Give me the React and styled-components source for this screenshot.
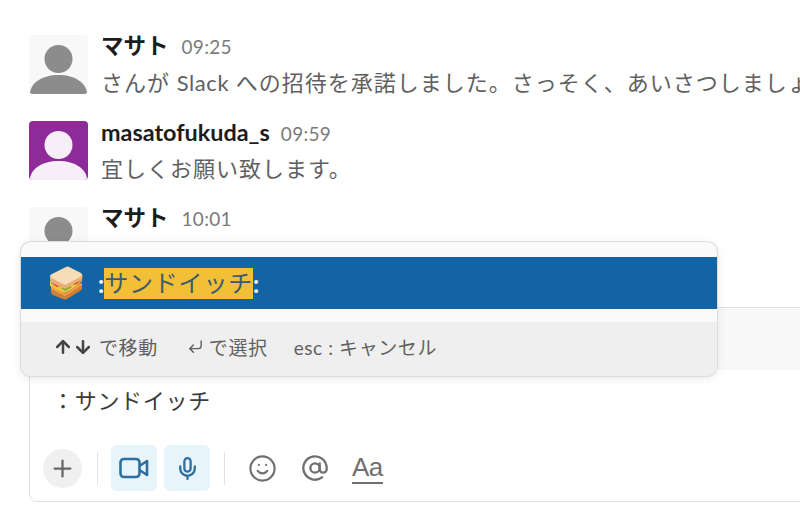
import React from 'react';
import styled, { createGlobalStyle } from 'styled-components';
import { ArrowUp, ArrowDown, CornerDownLeft, Plus, Mic, Smile, AtSign } from 'lucide-react';

const GlobalStyle = createGlobalStyle`
    html, body {
        margin: 0;
        background: #fff;
        font-family: Lato, 'Noto Sans CJK JP', sans-serif;
    }
`;

const Page = styled.div`
    position: relative;
    width: 800px;
    height: 526px;
    padding: 35px 0 0 29px;
    box-sizing: border-box;
    overflow: hidden;
`;

const Message = styled.div`
    display: flex;
    gap: 13px;
    height: 59px;
    margin-bottom: 27px;
`;

const AvatarBox = styled.div`
    flex: none;
    width: 59px;
    height: 59px;
    border-radius: 4px;
    overflow: hidden;
    background: ${(p) => p.$bg};
    svg { display: block; }
`;

const Body = styled.div`
    min-width: 0;
    white-space: nowrap;
`;

const Head = styled.div`
    display: flex;
    align-items: baseline;
    gap: ${(p) => p.$gap}px;
    height: 26px;
    margin-top: -2px;
    line-height: 26px;
`;

const Name = styled.span`
    font-size: ${(p) => p.$size}px;
    font-weight: 700;
    color: #1d1c1d;
`;

const Time = styled.span`
    font-size: 19px;
    letter-spacing: 0.3px;
    color: #7b7a7b;
`;

const Text = styled.div`
    margin-top: 9px;
    font-size: 22px;
    line-height: 30px;
    letter-spacing: 1px;
    color: #616061;
`;

const Latin = styled.span`
    letter-spacing: 0.6px;
`;

const Composer = styled.div`
    width: 800px;
    height: 195px;
    margin-top: 41px;
    border: 1px solid #e0e0e0;
    border-radius: 8px;
    box-sizing: border-box;
    overflow: hidden;
`;

const FormatBar = styled.div`
    height: 62px;
    background: #f8f8f8;
`;

const Input = styled.div`
    height: 75px;
    padding: 16px 0 0 22px;
    box-sizing: border-box;
    font-size: 22px;
    line-height: 30px;
    letter-spacing: 0.7px;
    color: #3d3c3d;
`;

const Toolbar = styled.div`
    display: flex;
    align-items: center;
    height: 46px;
    padding-left: 13px;
`;

const RoundButton = styled.div`
    display: flex;
    align-items: center;
    justify-content: center;
    width: 39px;
    height: 39px;
    border-radius: 50%;
    background: #f0f0f0;
    color: #666;
`;

const Divider = styled.div`
    width: 1px;
    height: 33px;
    margin: 0 ${(p) => p.$right}px 0 ${(p) => p.$left}px;
    background: #e2e2e2;
`;

const MediaButton = styled.div`
    display: flex;
    align-items: center;
    justify-content: center;
    width: 46px;
    height: 46px;
    margin-right: 7px;
    border-radius: 6px;
    background: #e8f4fb;
    color: #2f6f9f;
`;

const PlainIcon = styled.div`
    display: flex;
    align-items: center;
    justify-content: center;
    width: 30px;
    margin-right: ${(p) => p.$right}px;
    color: #707070;
`;

const FormatLabel = styled.span`
    font-family: 'Liberation Sans', sans-serif;
    font-size: 26px;
    line-height: 30px;
    color: #707070;
    letter-spacing: -0.5px;
    border-bottom: 2px solid #707070;
`;

const Popup = styled.div`
    position: absolute;
    left: 21px;
    top: 242px;
    width: 696px;
    height: 134px;
    background: #fafafa;
    border-radius: 10px;
    box-shadow: 0 0 0 1px #dcdcdc, 0 2px 10px rgba(0, 0, 0, 0.1);
    display: flex;
    flex-direction: column;
    overflow: hidden;
`;

const Suggestion = styled.div`
    display: flex;
    align-items: center;
    height: 52px;
    margin-top: 15px;
    padding-left: 27px;
    background: #1264a3;
    font-size: 24px;
    white-space: nowrap;
`;

const Colon = styled.span`
    margin-left: ${(p) => p.$left || 0}px;
    color: #fff;
    font-weight: 700;
    line-height: 31px;
`;

const Highlight = styled.span`
    display: block;
    height: 31px;
    line-height: 30px;
    background: #f2c037;
    color: #3c5a70;
    letter-spacing: 0.8px;
`;

const Hints = styled.div`
    display: flex;
    align-items: center;
    height: 54px;
    margin-top: 13px;
    padding: 0 0 5px 32px;
    box-sizing: border-box;
    background: #efefef;
    font-size: 19px;
    letter-spacing: 0.6px;
    color: #616061;
    white-space: nowrap;
`;

const Hint = styled.span`
    display: flex;
    align-items: center;
    margin-right: ${(p) => p.$right}px;
`;

const Keys = styled.span`
    display: flex;
    align-items: center;
    margin-right: ${(p) => p.$right}px;
    color: ${(p) => p.$color};
`;

const Avatar = ({ bg, fg }) => (
    <AvatarBox $bg={bg}>
        <svg width="59" height="59" viewBox="0 0 59 59">
            <circle cx="29.5" cy="24" r="14" fill={fg} />
            <path d="M1 59 C1 48 13 40 29.5 40 C46 40 58 48 58 59 Z" fill={fg} />
        </svg>
    </AvatarBox>
);

// カメラのアイコンは lucide のものより角が丸いので手書き
const VideoIcon = () => (
    <svg width="30" height="24" viewBox="0 0 30 24" fill="none" stroke="currentColor" strokeWidth="2.6" strokeLinejoin="round">
        <rect x="1.5" y="3" width="19" height="18" rx="3.5" />
        <path d="M20.5 10 L28 5 V19 L20.5 14" />
    </svg>
);

const Sandwich = () => (
    <svg width="36" height="34" viewBox="0 0 36 34">
        {/* bottom bread */}
        <path d="M3 21 L3 26 Q3 28 5 29 L15 33 Q17 34 19 33 L32 25 Q34 24 34 22 L34 17 Z" fill="#d27f35" />
        <path d="M3 21 L17 28 L34 17 L34 19 L17 30 L3 23 Z" fill="#eea24e" />
        {/* filling */}
        <path d="M2 15 L2 20 Q8 24 16 27 Q26 23 34 15 L34 11 Z" fill="#f0c43c" />
        <path d="M3 17 L9 21 L13 20 L8 16 Z" fill="#d8452a" />
        <path d="M13 22 L17 25 L24 21 L19 18 Z" fill="#7fb23c" />
        <path d="M25 19 L29 18 L33 14 L28 14 Z" fill="#d8452a" />
        {/* top bread */}
        <path d="M2 10 L2 14 Q2 16 4 17 L15 22 Q17 23 19 22 L33 14 Q35 13 34.5 9 L17 15 Z" fill="#e8ad78" />
        <path d="M18 1 Q20 0 22 1.5 L33 7 Q35 9 33 10.5 L19 18 Q17 19 15 18 L3.5 12 Q1 10 3 8.5 Z" fill="#f7dcb8" />
    </svg>
);

const messages = [
    {
        name: 'マサト', size: 22.5, gap: 13, time: '09:25', bg: '#f8f8f8', fg: '#8c8c8c',
        text: <>さんが <Latin>Slack</Latin> への招待を承諾しました。さっそく、あいさつしましょう。</>,
    },
    { name: 'masatofukuda_s', size: 23.4, gap: 11, time: '09:59', text: '宜しくお願い致します。', bg: '#8e2b98', fg: '#f7eff7' },
    { name: 'マサト', size: 22.5, gap: 13, time: '10:01', text: '', bg: '#f8f8f8', fg: '#8c8c8c' },
];

const App = () => {
    return (
        <Page>
            <GlobalStyle />
            {messages.map((item, i) => (
                <Message key={i}>
                    <Avatar bg={item.bg} fg={item.fg} />
                    <Body>
                        <Head $gap={item.gap}>
                            <Name $size={item.size}>{item.name}</Name>
                            <Time>{item.time}</Time>
                        </Head>
                        <Text>{item.text}</Text>
                    </Body>
                </Message>
            ))}
            <Composer>
                <FormatBar />
                <Input>：サンドイッチ</Input>
                <Toolbar>
                    <RoundButton><Plus size={27} strokeWidth={2} /></RoundButton>
                    <Divider $left={15} $right={13} />
                    <MediaButton><VideoIcon /></MediaButton>
                    <MediaButton><Mic size={25} strokeWidth={2.2} /></MediaButton>
                    <Divider $left={7} $right={22} />
                    <PlainIcon $right={23}><Smile size={29} strokeWidth={1.8} /></PlainIcon>
                    <PlainIcon $right={22}><AtSign size={28} strokeWidth={2} /></PlainIcon>
                    <FormatLabel>Aa</FormatLabel>
                </Toolbar>
            </Composer>
            <Popup>
                <Suggestion>
                    <Sandwich />
                    <Colon $left={14}>:</Colon>
                    <Highlight>サンドイッチ</Highlight>
                    <Colon>:</Colon>
                </Suggestion>
                <Hints>
                    <Hint $right={29}>
                        <Keys $right={6} $color="#454445">
                            <ArrowUp size={20} strokeWidth={3} />
                            <ArrowDown size={20} strokeWidth={3} />
                        </Keys>
                        で移動
                    </Hint>
                    <Hint $right={26}>
                        <Keys $right={5} $color="#616061">
                            <CornerDownLeft size={17} strokeWidth={2} />
                        </Keys>
                        で選択
                    </Hint>
                    <Hint $right={0}>esc : キャンセル</Hint>
                </Hints>
            </Popup>
        </Page>
    );
};

export default App;
